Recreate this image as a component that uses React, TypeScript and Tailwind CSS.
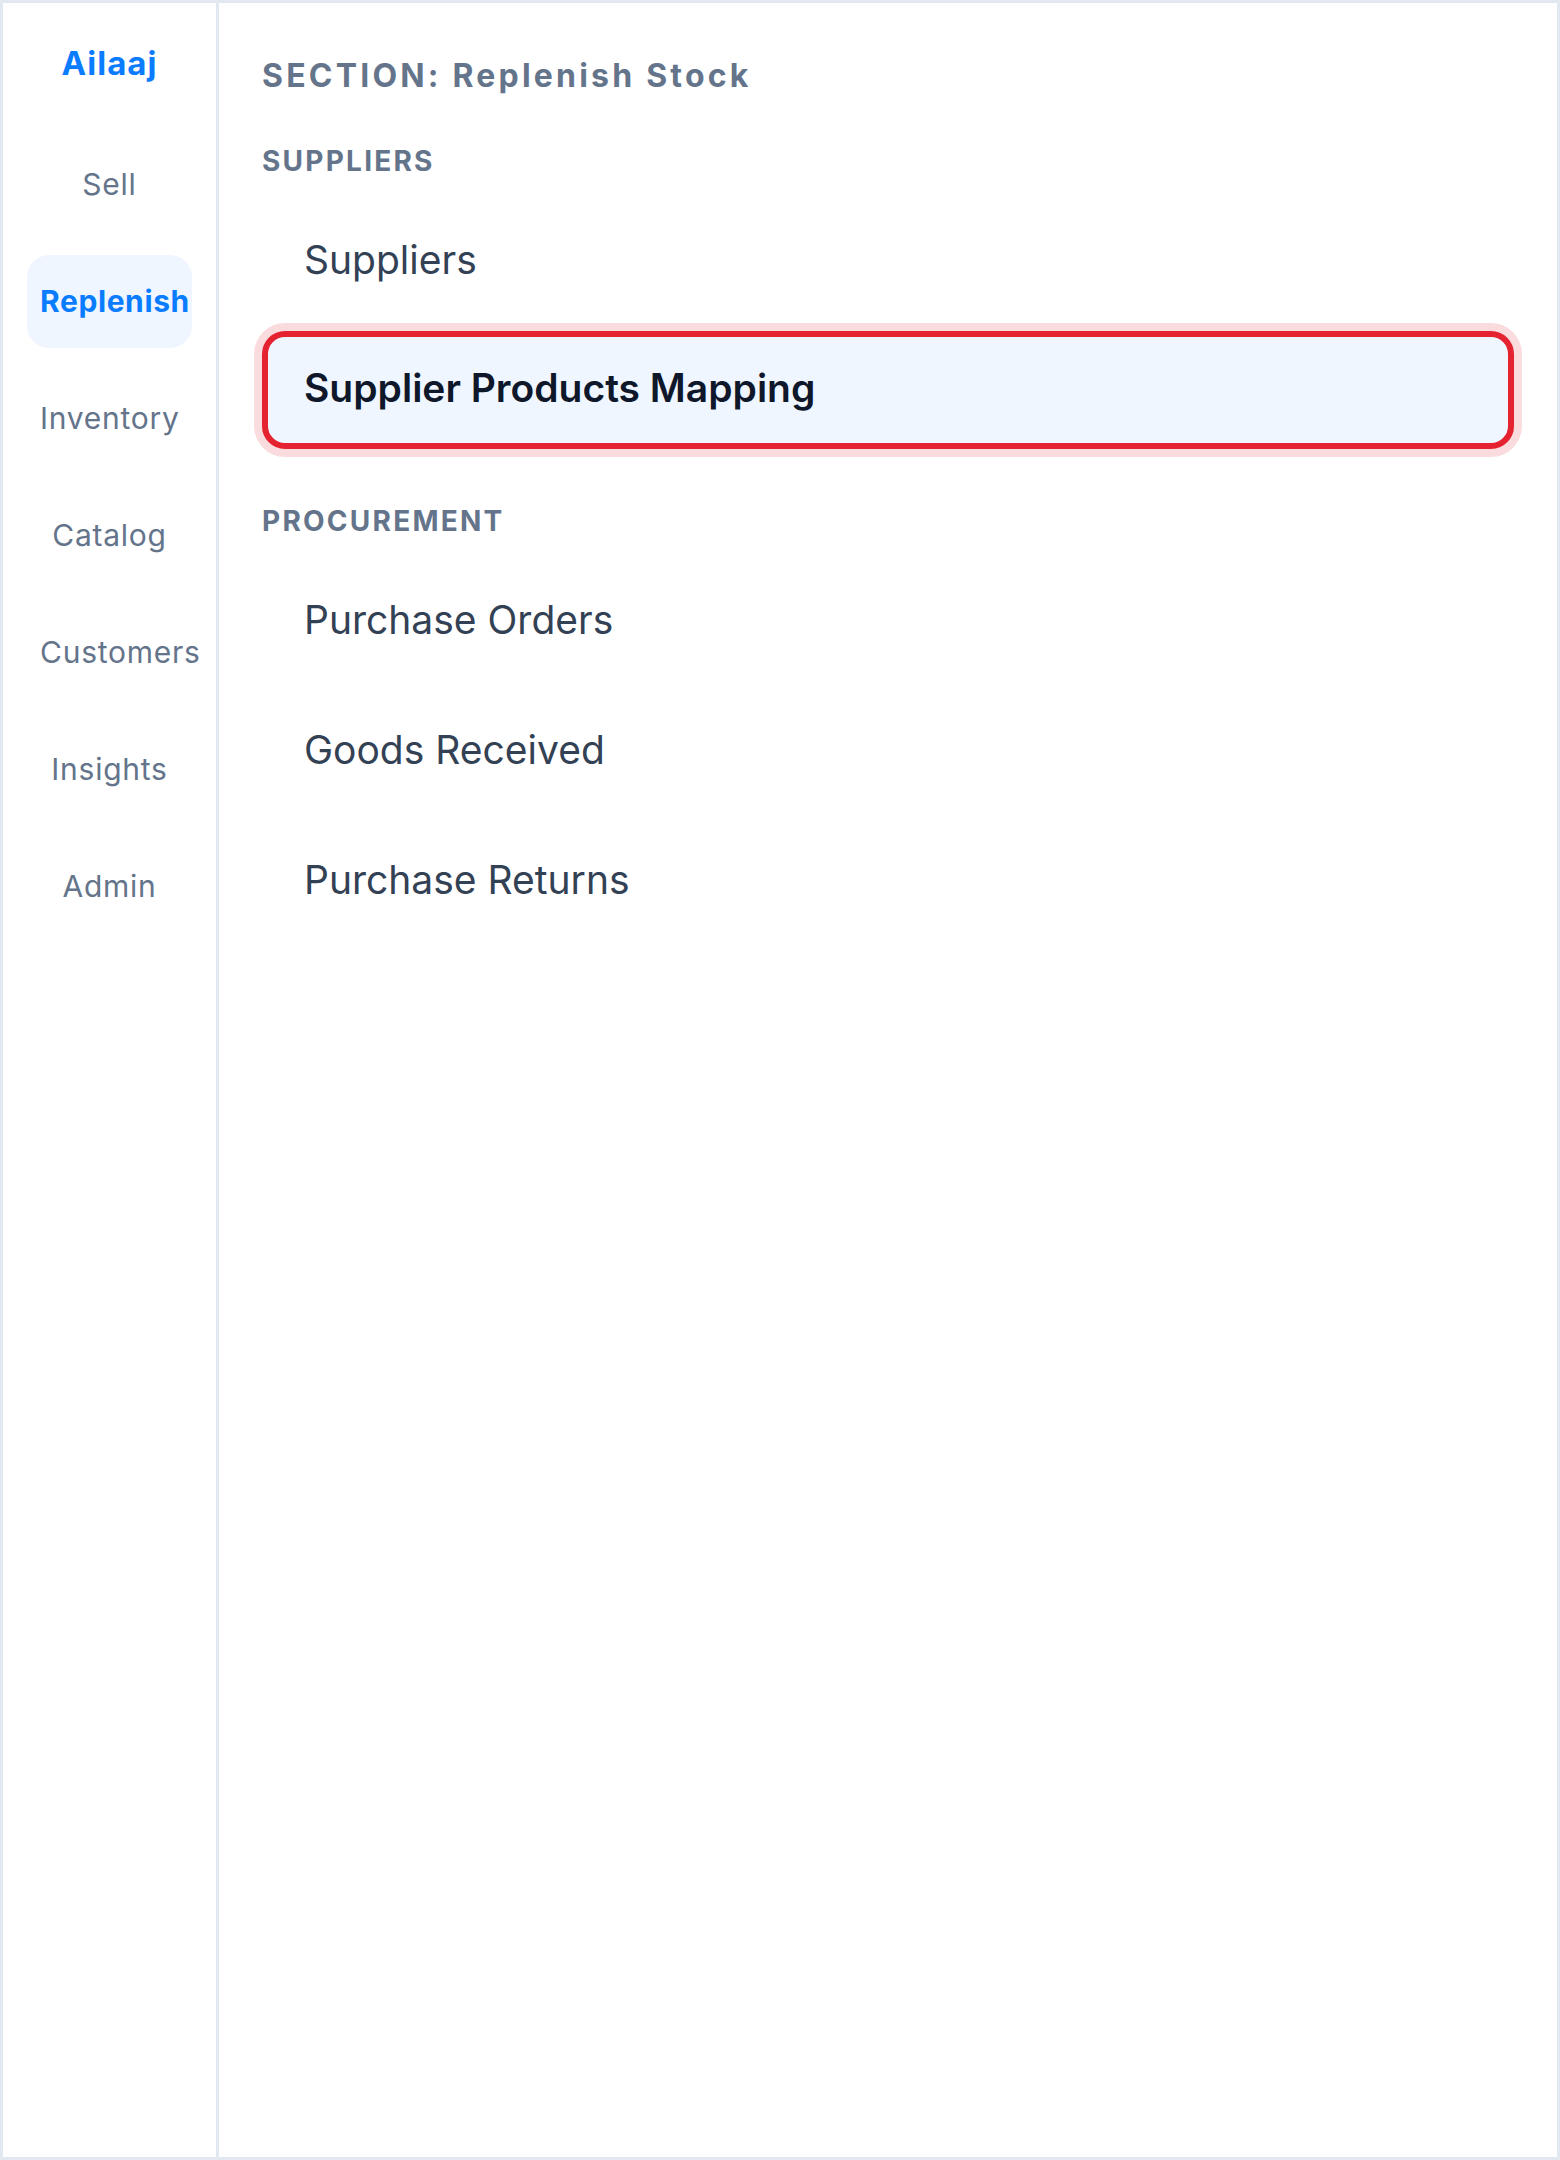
const sideItems = ["Sell", "Replenish", "Inventory", "Catalog", "Customers", "Insights", "Admin"]

const groups = [
  { title: "SUPPLIERS", items: ["Suppliers", "Supplier Products Mapping"] },
  { title: "PROCUREMENT", items: ["Purchase Orders", "Goods Received", "Purchase Returns"] },
]

export default function App() {
  const activeSide = "Replenish"
  const activeItem = "Supplier Products Mapping"

  return (
    <div
      className="flex h-[2160px] w-[1560px] border-[3px] border-[#e2e8f0] bg-white"
      style={{ fontFamily: "Inter, 'Noto Sans', sans-serif" }}
    >
      {/* Sidebar */}
      <aside className="flex w-[216px] shrink-0 flex-col items-center border-r-[3px] border-[#e2e8f0] pt-[40px]">
        <div className="h-[40px] text-[33px] font-bold leading-[40px] tracking-[0.03em] text-[#0a7cff]">Ailaaj</div>
        <nav className="mt-[55px] flex flex-col gap-[24px]">
          {sideItems.map((item) => (
            <div
              key={item}
              className={
                item === activeSide
                  ? "h-[93px] w-[165px] whitespace-nowrap rounded-[22px] bg-[#eff6ff] px-[13px] text-center text-[30px] font-bold leading-[93px] tracking-[0.02em] text-[#0a7cff]"
                  : "h-[93px] w-[165px] whitespace-nowrap rounded-[22px] px-[13px] text-center text-[30px] leading-[93px] tracking-[0.025em] text-[#64748b]"
              }
            >
              {item}
            </div>
          ))}
        </nav>
      </aside>

      {/* Main */}
      <main className="flex flex-1 flex-col px-[43px] pt-[53px]">
        <h1 className="text-[32px] font-bold leading-[40px] tracking-[0.1em] text-[#64748b]">
          SECTION: Replenish Stock
        </h1>
        {groups.map((group, gi) => (
          <section key={group.title} className={gi === 0 ? "mt-[47px]" : "mt-[54px]"}>
            <h2 className="text-[28px] font-bold leading-[36px] tracking-[0.08em] text-[#64748b]">{group.title}</h2>
            <div className="mt-[22px] flex flex-col gap-[12px]">
              {group.items.map((item) =>
                item === activeItem ? (
                  <div
                    key={item}
                    className="flex h-[118px] items-center rounded-[23px] border-[6px] border-[#e5222f] bg-[#eff6ff] pb-[3px] pl-[36px] text-[39px] font-semibold text-[#0f172a] shadow-[0_0_0_8px_#fadcdf]"
                  >
                    {item}
                  </div>
                ) : (
                  <div
                    key={item}
                    className="flex h-[118px] items-center rounded-[23px] border-[6px] border-transparent pl-[36px] text-[39px] text-[#334155]"
                  >
                    {item}
                  </div>
                )
              )}
            </div>
          </section>
        ))}
      </main>
    </div>
  )
}
